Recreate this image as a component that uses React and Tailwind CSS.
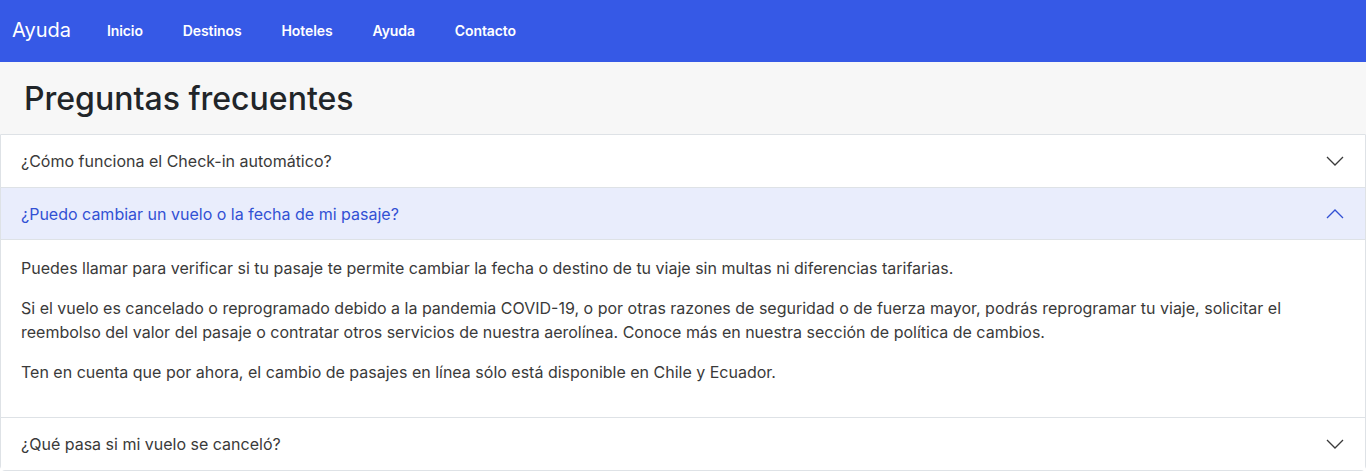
import React, { useState } from "react";

const faqs = [
  {
    q: "¿Cómo funciona el Check-in automático?",
    a: [],
  },
  {
    q: "¿Puedo cambiar un vuelo o la fecha de mi pasaje?",
    a: [
      "Puedes llamar para verificar si tu pasaje te permite cambiar la fecha o destino de tu viaje sin multas ni diferencias tarifarias.",
      "Si el vuelo es cancelado o reprogramado debido a la pandemia COVID-19, o por otras razones de seguridad o de fuerza mayor, podrás reprogramar tu viaje, solicitar el reembolso del valor del pasaje o contratar otros servicios de nuestra aerolínea. Conoce más en nuestra sección de política de cambios.",
      "Ten en cuenta que por ahora, el cambio de pasajes en línea sólo está disponible en Chile y Ecuador.",
    ],
  },
  {
    q: "¿Qué pasa si mi vuelo se canceló?",
    a: [],
  },
];

const navLinks = ["Inicio", "Destinos", "Hoteles", "Ayuda", "Contacto"];

const Chevron = ({ open }) => (
  <svg
    className={`w-5 h-5 shrink-0 ${open ? "rotate-180" : ""}`}
    viewBox="0 0 20 20"
    fill="none"
    stroke="currentColor"
    strokeWidth={1.3}
  >
    <path d="M2 6l8 8 8-8" />
  </svg>
);

export default function App() {
  const [open, setOpen] = useState(1);

  return (
    <div className="min-h-screen bg-white text-[#212529] font-['Inter','Liberation_Sans',sans-serif]">
      {/* Navbar */}
      <nav className="h-[62px] bg-[#3659e6] flex items-center px-3 pb-[2px]">
        <span className="text-white text-[20px] mr-4">Ayuda</span>
        <ul className="flex">
          {navLinks.map((l) => (
            <li key={l}>
              <a href="#" className="block px-5 text-white text-[14px] font-semibold tracking-[-0.1px]">
                {l}
              </a>
            </li>
          ))}
        </ul>
      </nav>

      {/* Title */}
      <div className="bg-[#f7f7f7] h-[72px] flex items-center px-6">
        <h1 className="text-[32px] font-medium leading-none pt-[2px]">Preguntas frecuentes</h1>
      </div>

      {/* Accordion */}
      <div className="border border-[#dee2e6] rounded-b-[5px]">
        {faqs.map((f, i) => {
          const isOpen = open === i;
          return (
            <div key={i} className={i > 0 ? "border-t border-[#dee2e6]" : ""}>
              <button
                onClick={() => setOpen(isOpen ? -1 : i)}
                className={`w-full flex items-center justify-between px-5 py-[14px] text-left text-[16px] leading-6 ${
                  isOpen
                    ? "bg-[#e9edfc] text-[#3251d4] shadow-[inset_0_-1px_0_#dee2e6]"
                    : "bg-white text-[#3a3a3a]"
                }`}
              >
                <span>{f.q}</span>
                <Chevron open={isOpen} />
              </button>
              {isOpen && (
                <div className="px-5 pt-4 pb-[33px] text-[16px] leading-6 text-[#3a3a3a]">
                  {f.a.map((p, j) => (
                    <p key={j} className={j < f.a.length - 1 ? "mb-4" : ""}>
                      {p}
                    </p>
                  ))}
                </div>
              )}
            </div>
          );
        })}
      </div>
    </div>
  );
}
